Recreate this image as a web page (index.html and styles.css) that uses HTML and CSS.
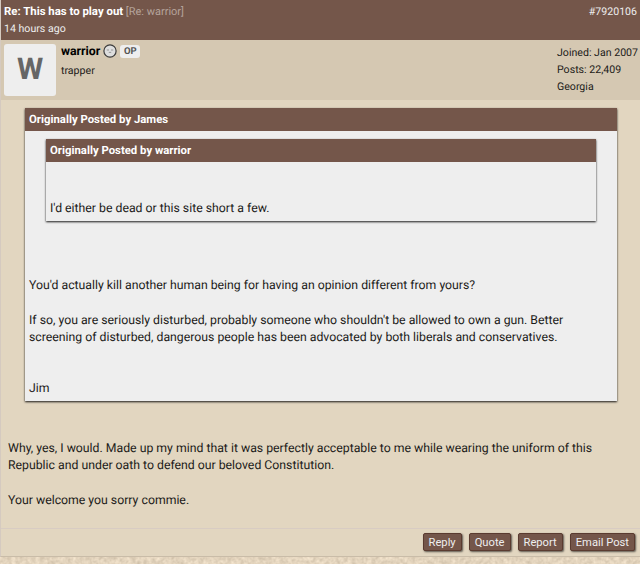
FILE: index.html
```
<!DOCTYPE html>
<html lang="en">
  <head>
    <meta charset="UTF-8" />
    <meta name="viewport" content="width=device-width, initial-scale=1.0" />
    <title>Re: This has to play out</title>
    <link rel="stylesheet" href="styles.css">
  </head>
  <body>
    <div class="post">
      <div class="subject">
        <div>
          <strong>Re: This has to play out</strong>
          <span class="re">[Re: warrior]</span>
          <div class="date">14 hours ago</div>
        </div>
        <span class="number">#7920106</span>
      </div>

      <div class="author">
        <div class="avatar">W</div>
        <div class="author-info">
          <div class="name-row">
            <span class="name">warrior</span>
            <svg class="face" width="14" height="14" viewBox="0 0 14 14">
              <circle cx="7" cy="7" r="6.1" fill="#dedede" stroke="#3c3c3c" stroke-width="1.2" />
              <path d="M3.8 6h2.2M8 6h2.2M5.8 8.4h2.4" fill="none" stroke="#888" stroke-width="0.8" />
            </svg>
            <span class="op">OP</span>
          </div>
          <div class="title">trapper</div>
        </div>
        <div class="stats">
          <div>Joined: Jan 2007</div>
          <div>Posts: 22,409</div>
          <div>Georgia</div>
        </div>
      </div>

      <div class="content">
        <div class="quote">
          <div class="quote-header">Originally Posted by James</div>
          <div class="quote-body">
            <div class="quote nested">
              <div class="quote-header">Originally Posted by warrior</div>
              <div class="quote-body">
                <br /><br />I'd either be dead or this site short a few.
              </div>
            </div>
            <br /><br /><br />
            You'd actually kill another human being for having an opinion different from yours?<br />
            <br />
            If so, you are seriously disturbed, probably someone who shouldn't be allowed to own a gun. Better<br />
            screening of disturbed, dangerous people has been advocated by both liberals and conservatives.<br />
            <br /><br />
            Jim
          </div>
        </div>
        <br /><br />
        Why, yes, I would. Made up my mind that it was perfectly acceptable to me while wearing the uniform of this<br />
        Republic and under oath to defend our beloved Constitution.<br />
        <br />
        Your welcome you sorry commie.
      </div>

      <div class="actions">
        <button class="button">Reply</button>
        <button class="button">Quote</button>
        <button class="button">Report</button>
        <button class="button">Email Post</button>
      </div>
    </div>
    <svg class="paper" width="640" height="7">
      <filter id="grain" x="0" y="0" width="100%" height="100%" color-interpolation-filters="sRGB">
        <feTurbulence type="fractalNoise" baseFrequency="0.25" numOctaves="2" seed="4" />
        <feColorMatrix values="0.2 0 0 0 0.79  0.2 0 0 0 0.73  0.2 0 0 0 0.64  0 0 0 0 1" />
      </filter>
      <rect width="640" height="7" filter="url(#grain)" />
    </svg>
  </body>
</html>
```
FILE: styles.css
```
* {
  box-sizing: border-box;
}
body {
  font-family: Roboto, Arial, sans-serif;
  font-size: 12.27px;
  line-height: 17.2px;
  text-rendering: geometricPrecision;
  background-color: #e4d5bd;
  color: #1c1b19;
  margin: 0;
  overflow: hidden;
}
.post {
  height: 557px;
  background-color: #e2d6c0;
  border-left: 1px solid #d5cac0;
  border-bottom: 1px solid #c9bca8;
}
.subject {
  display: flex;
  justify-content: space-between;
  height: 40px;
  padding: 3px 3px 0;
  background-color: #74564a;
  color: #eee;
  font-size: 10.6px;
}
.subject strong {
  color: #fff;
  font-size: 11.4px;
}
.re {
  color: #b5a39b;
  font-size: 11px;
}
.author {
  display: flex;
  height: 60px;
  padding: 4px 3px;
  background-color: #d5c8b2;
  font-size: 10.6px;
}
.avatar {
  width: 52px;
  height: 52px;
  border-radius: 3px;
  background-color: #eee;
  color: #666;
  font-size: 30px;
  font-weight: bold;
  line-height: 52px;
  text-align: center;
}
.author-info {
  flex: 1;
  padding-left: 5px;
}
.name-row {
  display: flex;
  gap: 3px;
  height: 18px;
}
.name {
  color: #000;
  font-size: 12.3px;
  font-weight: bold;
}
.face {
  display: block;
}
.op {
  width: 20px;
  height: 13px;
  margin-top: 1px;
  border-radius: 3px;
  background-color: #eee;
  color: #555;
  font-size: 9.5px;
  font-weight: bold;
  line-height: 14px;
  text-align: center;
}
.stats {
  width: 80px;
  white-space: nowrap;
}
.content {
  height: 429px;
  padding: 8px 7px 0;
  border-bottom: 1px solid #d8ccc3;
}
.quote {
  margin: 0 16px 5px 17px;
  background-color: #eee;
  box-shadow: 0 1px 2px rgba(0, 0, 0, 0.9);
}
.nested {
  margin: 4px 17px 5px;
}
.quote-header {
  height: 23px;
  padding: 3px 4px;
  background-color: #74564a;
  color: #fff;
  font-size: 11.35px;
  font-weight: bold;
}
.quote-body {
  padding: 4px 4px 3px;
}
.actions {
  display: flex;
  justify-content: flex-end;
  gap: 7px;
  padding: 4px 5px 0;
}
.button {
  height: 18px;
  padding: 0 5px;
  border: 1px solid #5a3b30;
  border-radius: 2px;
  background-color: #74564a;
  box-shadow: 1px 1px 2px rgba(0, 0, 0, 0.6);
  color: #eee;
  font-family: inherit;
  font-size: 11.2px;
  line-height: 17px;
}
.paper {
  display: block;
}
```
